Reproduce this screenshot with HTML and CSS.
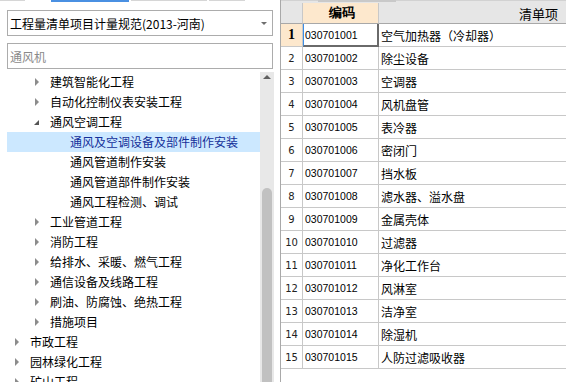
FILE: index.html
```html
<!DOCTYPE html>
<html>
<head>
  <meta charset="utf-8">
  <link rel="stylesheet" href="styles.css">
</head>
<body>
  <div class="app">
    <div class="side">
      <div class="tabs">
        <span class="tab t1"></span>
        <span class="tab t2 active"></span>
        <span class="tab t3"></span>
        <span class="tab t4"></span>
      </div>
      <div class="combo">
        <span class="combo-text">工程量清单项目计量规范(2013-河南)</span>
        <span class="caret"></span>
      </div>
      <input class="search" type="text" placeholder="通风机">
      <div class="tree-wrap">
        <ul class="tree">
          <li class="node lv2"><span class="arrow"></span>建筑智能化工程</li>
          <li class="node lv2"><span class="arrow"></span>自动化控制仪表安装工程</li>
          <li class="node lv2"><span class="arrow open"></span>通风空调工程</li>
          <li class="node lv3 selected"><span class="arrow none"></span>通风及空调设备及部件制作安装</li>
          <li class="node lv3"><span class="arrow none"></span>通风管道制作安装</li>
          <li class="node lv3"><span class="arrow none"></span>通风管道部件制作安装</li>
          <li class="node lv3"><span class="arrow none"></span>通风工程检测、调试</li>
          <li class="node lv2"><span class="arrow"></span>工业管道工程</li>
          <li class="node lv2"><span class="arrow"></span>消防工程</li>
          <li class="node lv2"><span class="arrow"></span>给排水、采暖、燃气工程</li>
          <li class="node lv2"><span class="arrow"></span>通信设备及线路工程</li>
          <li class="node lv2"><span class="arrow"></span>刷油、防腐蚀、绝热工程</li>
          <li class="node lv2"><span class="arrow"></span>措施项目</li>
          <li class="node lv1"><span class="arrow"></span>市政工程</li>
          <li class="node lv1"><span class="arrow"></span>园林绿化工程</li>
          <li class="node lv1"><span class="arrow"></span>矿山工程</li>
        </ul>
        <div class="vscroll">
          <span class="up"></span>
          <div class="thumb"></div>
        </div>
      </div>
    </div>

    <div class="grid">
      <div class="grid-top"><span class="grid-tab"></span></div>
      <div class="grid-head">
        <div class="cell c-num"></div>
        <div class="cell c-code hot">编码</div>
        <div class="cell c-name">清单项</div>
      </div>
      <div id="rows"></div>
    </div>
  </div>

  <script>
    const items = [
      ['030701001', '空气加热器（冷却器）'],
      ['030701002', '除尘设备'],
      ['030701003', '空调器'],
      ['030701004', '风机盘管'],
      ['030701005', '表冷器'],
      ['030701006', '密闭门'],
      ['030701007', '挡水板'],
      ['030701008', '滤水器、溢水盘'],
      ['030701009', '金属壳体'],
      ['030701010', '过滤器'],
      ['030701011', '净化工作台'],
      ['030701012', '风淋室'],
      ['030701013', '洁净室'],
      ['030701014', '除湿机'],
      ['030701015', '人防过滤吸收器']
    ]

    const parent = document.getElementById('rows')
    for (let i = 0; i < items.length; i++) {
      const first = i === 0
      const row = `<div class="grid-row">
        <div class="cell c-num ${first ? 'cur' : ''}">${i + 1}</div>
        <div class="cell c-code ${first ? 'focus' : ''}">${items[i][0]}</div>
        <div class="cell c-name">${items[i][1]}</div>
      </div>`
      parent.innerHTML += row
    }
  </script>
</body>
</html>
```

FILE: styles.css
```css
* {
  box-sizing: border-box;
}

html,
body {
  margin: 0;
  height: 382px;
  overflow: hidden;
  background: #fff;
}

.app {
  display: flex;
  height: 382px;
  font-family: "Noto Sans CJK SC", "Liberation Sans", sans-serif;
  font-size: 12px;
  color: #000;
}

/* left side */
.side {
  width: 280px;
  flex-shrink: 0;
  display: flex;
  flex-direction: column;
}

.tabs {
  display: flex;
  height: 2px;
  gap: 2px;
}

.tab {
  height: 1px;
  background: #d6d6d6;
}

.t1 { width: 25px; }
.t2 { width: 26px; margin-left: 24px; }
.t3 { width: 76px; }
.t4 { width: 36px; }

.tab.active {
  width: 78px;
  height: 2px;
  background: #4a90e2;
}

.combo {
  margin: 8px 0 0 7px;
  width: 266px;
  height: 26px;
  border: 1px solid #acacac;
  display: flex;
  align-items: center;
  justify-content: space-between;
  padding: 0 4px 0 2px;
}

.combo-text {
  font-size: 12px;
}

.caret {
  width: 0;
  height: 0;
  border-left: 3px solid transparent;
  border-right: 3px solid transparent;
  border-top: 3px solid #6e6e6e;
  margin-right: 1px;
}

.search {
  margin: 7px 0 0 7px;
  width: 266px;
  height: 26px;
  border: 1px solid #acacac;
  padding: 0 2px;
  font-family: "Noto Sans CJK SC", sans-serif;
  font-size: 12px;
  outline: none;
}

.search::placeholder {
  color: #8a8a8a;
}

.tree-wrap {
  margin: 3px 0 0 7px;
  display: flex;
  flex: 1;
  min-height: 0;
}

.tree {
  list-style: none;
  margin: 0;
  padding: 0;
  width: 253px;
}

.node {
  height: 20px;
  line-height: 20px;
  display: flex;
  align-items: center;
  white-space: nowrap;
}

.lv1 { padding-left: 7px; }
.lv2 { padding-left: 27px; }
.lv3 { padding-left: 47px; }

.node.selected {
  background: #cce8ff;
  color: #14309a;
}

.arrow {
  width: 16px;
  height: 20px;
  flex-shrink: 0;
  position: relative;
}

.arrow::before {
  content: "";
  position: absolute;
  left: 1px;
  top: 6px;
  border-top: 4px solid transparent;
  border-bottom: 4px solid transparent;
  border-left: 4px solid #8c8c8c;
}

.arrow.open::before {
  left: 0;
  top: 8px;
  border-top: 5px solid transparent;
  border-bottom: 0;
  border-left: 0;
  border-right: 5px solid #555;
}

.arrow.none::before {
  display: none;
}

.vscroll {
  width: 14px;
  background: #e8e8e8;
  display: flex;
  flex-direction: column;
  align-items: center;
}

.up {
  margin-top: 3px;
  width: 0;
  height: 0;
  border-left: 4px solid transparent;
  border-right: 4px solid transparent;
  border-bottom: 4px solid #606060;
}

.thumb {
  margin-top: 109px;
  width: 10px;
  flex: 1;
  background: #c1c1c1;
  border-radius: 5px 5px 0 0;
}

/* right grid */
.grid {
  flex: 1;
  overflow: hidden;
  border-left: 1px solid #a9a9a9;
}

.grid-top {
  height: 3px;
  background: #e6e6e6;
  border-top: 1px solid #d2d2d2;
  position: relative;
}

.grid-tab {
  position: absolute;
  left: 37px;
  top: -1px;
  width: 78px;
  height: 2px;
  background: #c9c9c9;
}

.grid-head,
.grid-row {
  display: flex;
  width: 420px;
}

.cell {
  flex-shrink: 0;
  border-right: 1px solid #c8c8c8;
  border-bottom: 1px solid #c8c8c8;
  white-space: nowrap;
  overflow: hidden;
  display: flex;
  align-items: center;
}

.grid-head .cell {
  height: 21px;
  background: #e6e6e6;
  border-bottom-color: #a8a8a8;
  font-size: 13px;
}

.grid-head .c-code {
  justify-content: center;
  font-weight: bold;
}

.grid-head .c-name {
  justify-content: center;
}

.grid-head .hot {
  background: #fde8cd;
}

.grid-row .cell {
  height: 23px;
}

.c-num {
  width: 22px;
  justify-content: center;
  font-family: "DejaVu Sans", sans-serif;
  font-size: 10px;
  color: #222;
}

.c-num.cur {
  background: #fde8cd;
  font-family: "Liberation Serif", serif;
  font-weight: bold;
  font-size: 14px;
  color: #000;
}

.c-code {
  width: 76px;
  padding-left: 2px;
  font-family: "Liberation Sans", sans-serif;
  font-size: 10.5px;
}

.c-code.focus {
  border-left: 1px solid #3d8ee6;
  border-right: 2px solid #6a6a6a;
  border-bottom: 2px solid #6a6a6a;
  padding-left: 1px;
}

.c-name {
  width: 318px;
  padding-left: 2px;
  font-size: 12px;
}
```
